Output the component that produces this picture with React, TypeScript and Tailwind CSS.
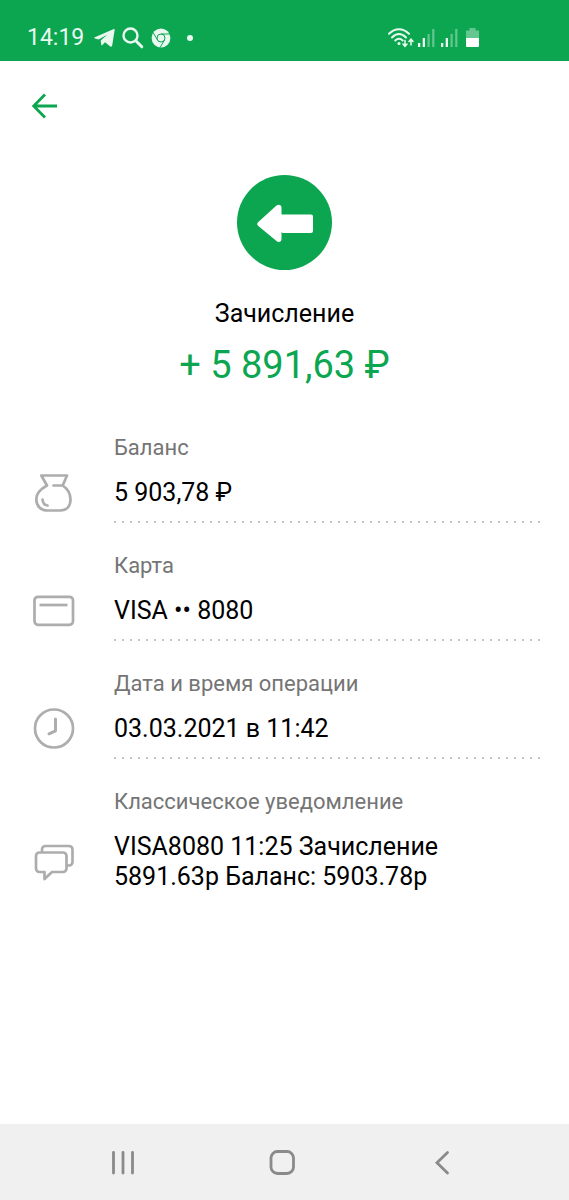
import type { ReactNode } from "react";

const GREEN = "#0ca651";
const GREY = "#adadad";

function StatusBar() {
  return (
    <div className="flex h-[61px] shrink-0 items-end justify-between bg-[#0ca651] pr-[90px] pb-2 pl-[27px] text-[#e9f9ef]">
      <div className="flex h-[30px] items-center">
        <span className="w-[67px] text-[23px] leading-[30px]">14:19</span>
        <svg width="21" height="20" viewBox="0 0 21 20" fill="currentColor">
          <path d="M.8 9.3 19.3 1.2c.9-.3 1.5.1 1.3 1.1l-2.4 15.3c-.2 1.1-1 1.4-1.9.8L11 14.3l-2.6 2.8c-.5.5-1 .3-1.1-.3l-.6-4.2L13.500 6.500 4.700 11.600.8 10.400c-.8-.3-.8-.8 0-1.100z" />
        </svg>
        <svg className="ml-[7px]" width="22" height="22" viewBox="0 0 22 22" fill="none" stroke="currentColor">
          <circle cx="8.5" cy="8.5" r="7" strokeWidth="2.4" />
          <path d="m13.8 13.8 6 6" strokeWidth="3" strokeLinecap="round" />
        </svg>
        <svg className="ml-[7px]" width="20" height="20" viewBox="0 0 20 20">
          <circle cx="10" cy="10" r="9.4" fill="currentColor" />
          <g fill="none" stroke={GREEN} strokeWidth="1">
            <circle cx="10" cy="10" r="4" />
            <path d="M10 6h9M6.5 12 2 4.4M13.5 12 9 19.6" />
          </g>
        </svg>
        <span className="ml-4 size-[6px] rounded-full bg-[#e9f9ef]" />
      </div>
      <div className="flex h-[30px] items-center">
        <svg width="26" height="20" viewBox="0 0 26 20" fill="none" stroke="currentColor" strokeLinecap="round">
          <path d="M1 5.8C7-.4 15-.4 21 5.8M4 9.5c4.4-4.6 9.6-4.6 14 0M7.3 12.5c2.5-2.3 4.9-2.3 7.4 0" strokeWidth="2" />
          <circle cx="11" cy="15.5" r="1.5" fill="currentColor" stroke="none" />
          <path d="M17 12.5V18M15 16l2 2.3 2-2.3M23 17v-5.500M21 13.500l2-2.300 2 2.300" strokeWidth="1.5" />
        </svg>
        <SignalIcon />
        <SignalIcon />
        <svg className="ml-[6px]" width="13" height="20" viewBox="0 0 13 20" fill="currentColor">
          <path d="M3.5 0h6v2.500H13V10H0V2.500h3.500z" opacity=".4" />
          <path d="M0 10h13v8a1 1 0 0 1-1 1H1a1 1 0 0 1-1-1z" fill="#fff" />
        </svg>
      </div>
    </div>
  );
}

function SignalIcon() {
  return (
    <svg className="mr-[2px] ml-1" width="17" height="20" viewBox="0 0 17 20" fill="currentColor">
      <path d="M0 15h2.300v4H0zM4.700 10H7v9H4.700z" />
      <path d="M9.500 6h2.200v13H9.500zM14.200 1h2.200v18h-2.200z" opacity=".4" />
    </svg>
  );
}

function Field({ icon, label, children, last }: { icon: ReactNode; label: string; children: ReactNode; last?: boolean }) {
  return (
    <div className="mb-[30px] grid grid-cols-[81px_1fr]">
      <dt className="col-start-2 mb-[17px] text-[22px] leading-[26px] text-[#757575]">{label}</dt>
      <div className="col-start-1 row-start-2 -my-2 flex w-[42px] items-center justify-center">{icon}</div>
      <dd className="col-start-2 row-start-2 text-[25px] leading-[30px] text-black">{children}</dd>
      {!last && (
        <div className="col-start-2 mt-[13px] h-[2px] bg-[linear-gradient(to_right,#c4c4c4_2px,transparent_2px)] bg-[length:8px_2px]" />
      )}
    </div>
  );
}

function BagIcon() {
  return (
    <svg width="42" height="42" viewBox="0 0 42 42" fill="none" stroke={GREY} strokeWidth="2.7" strokeLinecap="round" strokeLinejoin="round">
      <path d="M20.5 13.5h9.2L34 3.500H8.300l5.700 10C7.500 17 3.300 21 3.300 27.200c0 7 4.500 11.300 11.200 11.300H27c7 0 10.500-4.500 10.500-11.300 0-6.200-2.800-10.200-7.800-13.700" />
      <path d="M9.500 27.500c.3 3.500 2.200 5.600 5 6" />
    </svg>
  );
}

function CardIcon() {
  return (
    <svg width="42" height="32" viewBox="0 0 42 32" fill="none" stroke={GREY}>
      <rect x="1.500" y="1.800" width="38.500" height="28" rx="3.500" strokeWidth="2.7" />
      <path d="M6.500 10h28" strokeWidth="2.7" />
    </svg>
  );
}

function ClockIcon() {
  return (
    <svg width="42" height="42" viewBox="0 0 42 42" fill="none" stroke={GREY} strokeWidth="2.7" strokeLinecap="round" strokeLinejoin="round">
      <circle cx="21" cy="20.500" r="19" />
      <path d="M22.500 11v11.800l-6.500 3" strokeWidth="3" />
    </svg>
  );
}

function ChatIcon() {
  return (
    <svg width="42" height="38" viewBox="0 0 42 38" fill="none" stroke={GREY} strokeWidth="2.7" strokeLinejoin="round">
      <path d="M6.500 9.500H30a3.500 3.500 0 0 1 3.500 3.500v12.500A3.500 3.500 0 0 1 30 29H19l-7.500 7v-7h-5A3.500 3.500 0 0 1 3 25.500V13a3.500 3.500 0 0 1 3.500-3.500z" />
      <path d="M9 9.500V6.500A3.500 3.500 0 0 1 12.500 3H36A3.500 3.500 0 0 1 39.500 6.500V19a3.500 3.500 0 0 1-3.500 3.500h-2.500" />
    </svg>
  );
}

function NavBar() {
  return (
    <nav className="grid h-[76px] shrink-0 grid-cols-3 bg-[#f0f0f0] pr-[47px] pl-[43px] text-[#8a8a8a]">
      <button aria-label="Недавние" className="flex items-center justify-center">
        <svg width="24" height="26" viewBox="0 0 24 26" stroke="currentColor" strokeWidth="2.800" strokeLinecap="round">
          <path d="M2.500 3.500v20.500M12 3.500v20.500M21.500 3.500v20.500" />
        </svg>
      </button>
      <button aria-label="Домой" className="flex items-center justify-center">
        <svg width="28" height="28" viewBox="0 0 28 28" fill="none" stroke="currentColor" strokeWidth="2.800">
          <rect x="3" y="3.500" width="22.500" height="22" rx="6.500" />
        </svg>
      </button>
      <button aria-label="Назад" className="flex items-center justify-center">
        <svg width="16" height="26" viewBox="0 0 16 26" fill="none" stroke="currentColor" strokeWidth="2.800" strokeLinecap="round">
          <path d="M13.500 3.500 3 13.800 13.500 24" />
        </svg>
      </button>
    </nav>
  );
}

export default function App() {
  return (
    <div className="flex min-h-screen flex-col bg-white font-[Roboto,sans-serif]">
      <StatusBar />
      <main className="flex-1">
        <header className="flex px-[30px] pt-[30px]">
          <button aria-label="Вернуться">
            <svg width="28" height="28" viewBox="0 0 28 28" fill="none" stroke={GREEN} strokeWidth="2.800">
              <path d="M27 15H4M15 3.500 3.700 15 15 26.500" />
            </svg>
          </button>
        </header>

        <section className="mt-14 flex flex-col items-center">
          <div className="flex size-[95px] items-center justify-center rounded-full bg-[#0ca651]">
            <svg width="58" height="38" viewBox="0 0 58 38" fill="#fff">
              <path d="M2.300 18 20.500 1.600c2.200-1.700 5-.6 5 2V10.500H55c1.200 0 2 .8 2 2v14.500c0 1.200-.8 2-2 2H27.500c-1.200 0-2-.6-2-1.500v7.500c0 2.800-2.800 3.900-5 2.100L2.300 22c-1.500-1.400-1.500-2.700 0-4z" />
            </svg>
          </div>
          <h1 className="mt-[29px] text-[25px] leading-[30px] text-black">Зачисление</h1>
          <p className="mt-[13px] text-[38px] leading-[46px] text-[#0ca651]">+ 5 891,63 ₽</p>
        </section>

        <dl className="mt-[47px] pr-[25px] pl-[33px]">
          <Field icon={<BagIcon />} label="Баланс">5 903,78 ₽</Field>
          <Field icon={<CardIcon />} label="Карта">VISA •• 8080</Field>
          <Field icon={<ClockIcon />} label="Дата и время операции">03.03.2021 в 11:42</Field>
          <Field icon={<ChatIcon />} label="Классическое уведомление" last>
            VISA8080 11:25 Зачисление
            <br />
            5891.63р Баланс: 5903.78р
          </Field>
        </dl>
      </main>
      <NavBar />
    </div>
  );
}
